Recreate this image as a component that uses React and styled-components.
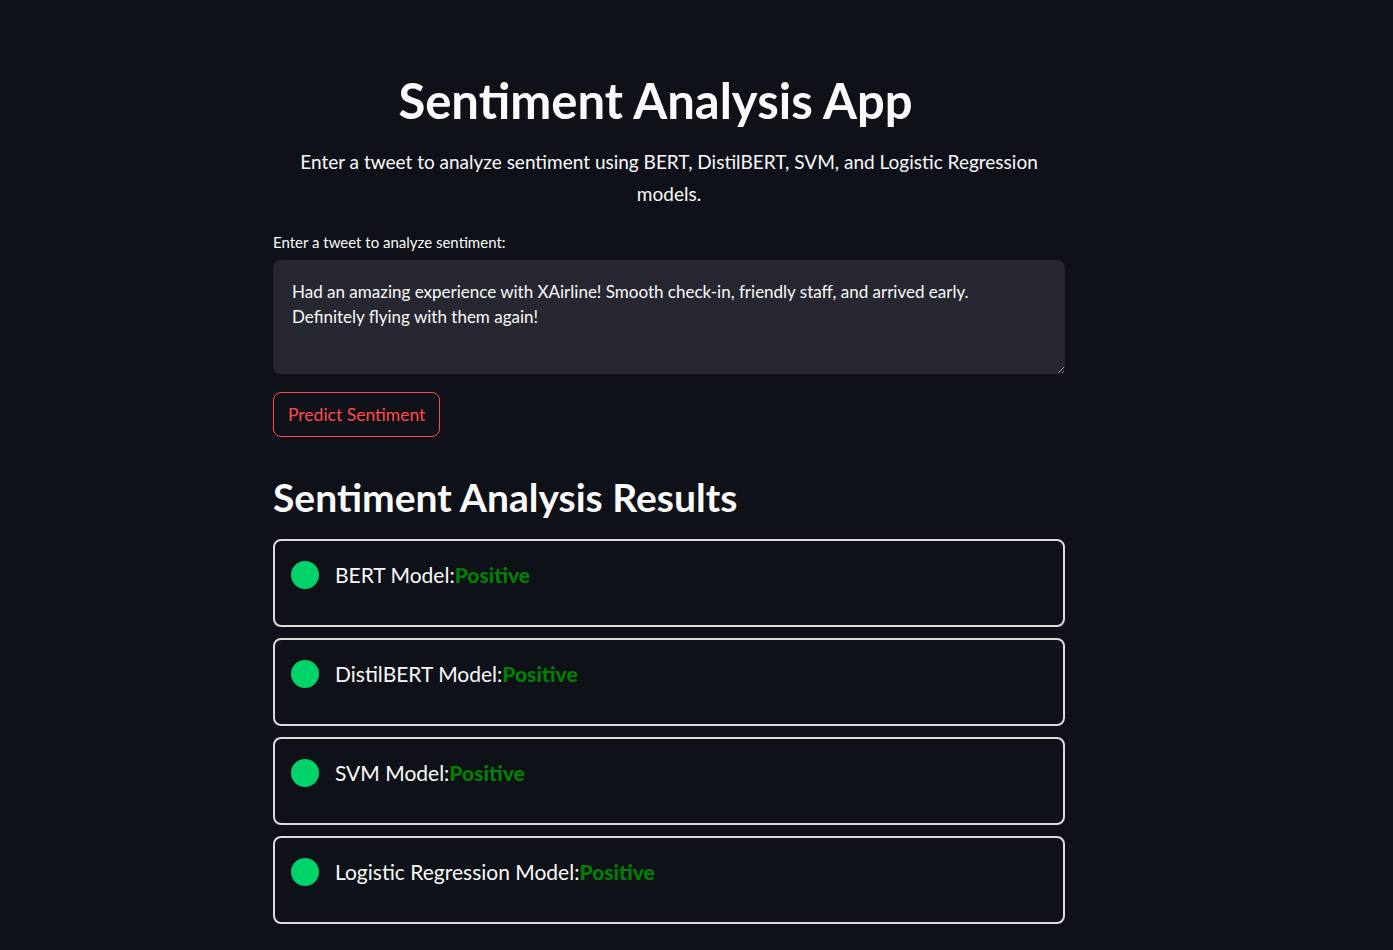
import React from "react";
import styled, { createGlobalStyle } from "styled-components";

const COLORS = {
  BG: "#0e1117",
  TEXT: "#fafafa",
  INPUT: "#262730",
  RED: "#ff4b4b",
  GREEN: "#008000",
  DOT: "#00d26a",
  CARD_BORDER: "#dcdcdc"
};

const GlobalStyle = createGlobalStyle`
  html, body {
    margin: 0;
    padding: 0;
    background: ${COLORS.BG};
    color: ${COLORS.TEXT};
    font-family: "Lato", "Liberation Sans", sans-serif;
  }
  * { box-sizing: border-box; }
`;

const Page = styled.div`
  min-height: 950px;
  padding: 68px 0 24px 273px;
`;

const Main = styled.main`
  width: 792px;
  display: flex;
  flex-direction: column;
`;

const Title = styled.h1`
  margin: 0;
  padding-right: 27px;
  text-align: center;
  font-size: 49px;
  font-weight: 700;
  line-height: 64px;
`;

const Subtitle = styled.p`
  margin: 14px 0 0;
  text-align: center;
  font-size: 19px;
  line-height: 32px;
`;

const Label = styled.label`
  margin-top: 22px;
  font-size: 15px;
  line-height: 20px;
`;

const TextArea = styled.textarea`
  margin-top: 8px;
  width: 100%;
  height: 114px;
  padding: 19px 48px 19px 19px;
  border: none;
  border-radius: 8px;
  background: ${COLORS.INPUT};
  color: ${COLORS.TEXT};
  font-family: inherit;
  font-size: 17px;
  line-height: 25px;
  resize: vertical;
  outline: none;
`;

const Button = styled.button`
  align-self: flex-start;
  margin-top: 18px;
  height: 45px;
  padding: 0 14px;
  border: 1px solid ${COLORS.RED};
  border-radius: 8px;
  background: transparent;
  color: ${COLORS.RED};
  font-family: inherit;
  font-size: 17.5px;
  cursor: pointer;
`;

const Heading = styled.h2`
  margin: 36px 0 0;
  font-size: 39px;
  font-weight: 700;
  line-height: 48px;
`;

const Results = styled.div`
  margin-top: 18px;
  display: flex;
  flex-direction: column;
  gap: 11px;
`;

const Card = styled.div`
  height: 88px;
  padding: 20px 16px;
  border: 2px solid ${COLORS.CARD_BORDER};
  border-radius: 8px;
  display: flex;
  align-items: flex-start;
  gap: 16px;
`;

const Dot = styled.span`
  flex: none;
  width: 28px;
  height: 28px;
  border-radius: 50%;
  background: ${COLORS.DOT};
`;

const ModelText = styled.p`
  margin: 0;
  font-size: 21px;
  line-height: 28px;
`;

const Verdict = styled.span`
  color: ${({ $positive }) => ($positive ? COLORS.GREEN : COLORS.RED)};
  font-weight: 900;
`;

const results = [
  { model: "BERT", label: "Positive" },
  { model: "DistilBERT", label: "Positive" },
  { model: "SVM", label: "Positive" },
  { model: "Logistic Regression", label: "Positive" }
];

const tweet =
  "Had an amazing experience with XAirline! Smooth check-in, friendly staff, and arrived early. Definitely flying with them again!";

export default function App() {
  return (
    <>
      <GlobalStyle />
      <Page>
        <Main>
          <Title>Sentiment Analysis App</Title>
          <Subtitle>
            Enter a tweet to analyze sentiment using BERT, DistilBERT, SVM, and Logistic Regression
            models.
          </Subtitle>
          <Label htmlFor="tweet">Enter a tweet to analyze sentiment:</Label>
          <TextArea id="tweet" defaultValue={tweet} />
          <Button>Predict Sentiment</Button>
          <Heading>Sentiment Analysis Results</Heading>
          <Results>
            {results.map((r) => (
              <Card key={r.model}>
                <Dot />
                <ModelText>
                  {r.model} Model:
                  <Verdict $positive={r.label === "Positive"}>{r.label}</Verdict>
                </ModelText>
              </Card>
            ))}
          </Results>
        </Main>
      </Page>
    </>
  );
}
